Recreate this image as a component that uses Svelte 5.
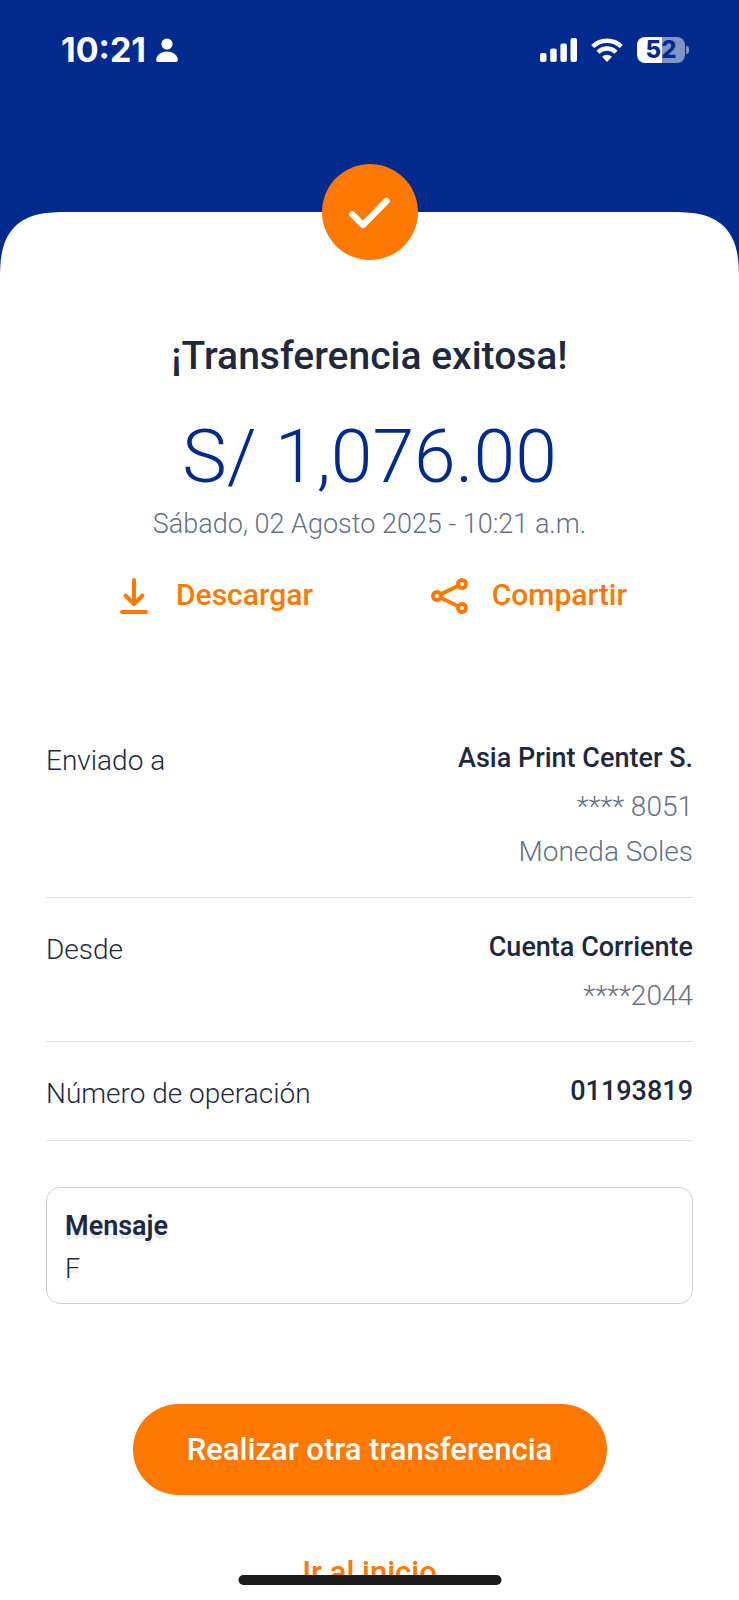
<script>
	let amount = 'S/ 1,076.00';
	let date = 'Sábado, 02 Agosto 2025 - 10:21 a.m.';
	let message = 'F';

	let rows = [
		{ label: 'Enviado a', value: 'Asia Print Center S.', details: ['**** 8051', 'Moneda Soles'] },
		{ label: 'Desde', value: 'Cuenta Corriente', details: ['****2044'] },
		{ label: 'Número de operación', value: '01193819', details: [] }
	];
</script>

<svelte:head>
	<title>Transferencia exitosa</title>
</svelte:head>

<div class="screen">
	<header>
		<div class="status">
			<div class="status-side">
				<span class="time">10:21</span>
				<svg width="22" height="24" viewBox="0 0 22 24" fill="#fff" aria-hidden="true">
					<circle cx="11" cy="6" r="5.6" />
					<path d="M2.2 24C.8 24 .2 23.200 .2 22 .2 17.500 5 13.600 11 13.600S21.800 17.500 21.800 22c0 1.200-.6 2-2 2z" />
				</svg>
			</div>
			<div class="status-side right">
				<svg width="38" height="24" viewBox="0 0 38 24" fill="#fff" aria-hidden="true">
					<rect x="1" y="15" width="6.500" height="9" rx="2" />
					<rect x="11.200" y="10.500" width="6.500" height="13.500" rx="2" />
					<rect x="21.400" y="5.500" width="6.500" height="18.500" rx="2" />
					<rect x="31.500" y="0" width="6.500" height="24" rx="2" />
				</svg>
				<svg width="32" height="24" viewBox="0 0 32 24" aria-hidden="true">
					<g fill="none" stroke="#fff" stroke-width="4.400">
						<path d="M1.700 8.500a20.500 20.500 0 0 1 28.600 0" />
						<path d="M7 14.200a12.800 12.800 0 0 1 18 0" />
					</g>
					<path d="M16 24l-5-5.200a7.300 7.300 0 0 1 10 0z" fill="#fff" />
				</svg>
				<div class="battery">
					<span class="level">52</span>
					<span class="tip"></span>
				</div>
			</div>
		</div>
	</header>

	<main>
		<div class="badge">
			<svg width="42" height="34" viewBox="0 0 42 34" fill="none" stroke="#fff" stroke-width="6.500" stroke-linecap="round" stroke-linejoin="round" aria-hidden="true">
				<path d="M3.500 19.500L14 30 37.500 6" />
			</svg>
		</div>

		<h1>¡Transferencia exitosa!</h1>
		<p class="amount">{amount}</p>
		<p class="date">{date}</p>

		<div class="actions">
			<button class="action">
				<svg width="38" height="38" viewBox="0 0 38 38" fill="none" stroke="currentColor" stroke-width="4" stroke-linecap="round" stroke-linejoin="round" aria-hidden="true">
					<path d="M19 3v23M10.500 18.500L19 27l8.500-8.500M7 35h24" />
				</svg>
				Descargar
			</button>
			<button class="action">
				<svg width="38" height="38" viewBox="0 0 38 38" fill="none" stroke="currentColor" stroke-width="4" aria-hidden="true">
					<circle cx="6" cy="19" r="4" />
					<circle cx="31" cy="7" r="4" />
					<circle cx="31" cy="31" r="4" />
					<path d="M9.600 17.200L27.400 8.800M9.600 20.800L27.400 29.200" />
				</svg>
				Compartir
			</button>
		</div>

		<dl>
			{#each rows as row}
				<div class="row">
					<dt>{row.label}</dt>
					<dd>
						<strong>{row.value}</strong>
						{#if row.details.length > 0}
							<div class="details">
								{#each row.details as detail}
									<span>{detail}</span>
								{/each}
							</div>
						{/if}
					</dd>
				</div>
			{/each}
		</dl>

		<section class="message">
			<h2>Mensaje</h2>
			<p>{message}</p>
		</section>

		<button class="primary">Realizar otra transferencia</button>
		<a class="home" href="#inicio">Ir al inicio</a>
	</main>

	<div class="home-bar"></div>
</div>

<style>
	:global(body) {
		margin: 0;
		background: #fff;
	}

	.screen {
		position: relative;
		height: 100vh;
		overflow: hidden;
		background: #002a8d;
		color: #1e293d;
		font-family: Roboto, 'Open Sans', sans-serif;
		font-size: 27px;
		line-height: 36px;
	}

	header {
		height: 212px;
	}

	.status {
		display: flex;
		justify-content: space-between;
		padding: 32px 54px 0 61px;
		font-family: Inter, sans-serif;
		color: #fff;
	}

	.status-side {
		display: flex;
		align-items: center;
		gap: 10px;
	}

	.status-side.right {
		gap: 14px;
	}

	.time {
		font-size: 34px;
		font-weight: 700;
	}

	.battery {
		position: relative;
		width: 48px;
		height: 26px;
		border-radius: 8px;
		background: linear-gradient(90deg, #fff 52%, #8094c6 52%);
		display: flex;
		align-items: center;
		justify-content: center;
	}

	.level {
		font-size: 24px;
		font-weight: 800;
		color: #002a8d;
	}

	.tip {
		position: absolute;
		right: -4px;
		top: 9px;
		width: 3px;
		height: 8px;
		border-radius: 0 4px 4px 0;
		background: #8094c6;
	}

	main {
		display: flex;
		flex-direction: column;
		align-items: center;
		padding: 0 46px;
		background: #fff;
		border-radius: 68px 68px 0 0;
		corner-shape: superellipse(1.5);
	}

	.badge {
		width: 96px;
		height: 96px;
		margin-top: -48px;
		border-radius: 50%;
		background: #ff7800;
		display: flex;
		align-items: center;
		justify-content: center;
	}

	h1,
	h2,
	p,
	dl,
	dd {
		margin: 0;
	}

	h1 {
		margin-top: 72px;
		font-size: 39px;
		font-weight: 500;
		line-height: 48px;
	}

	.amount {
		margin-top: 34px;
		font-size: 75px;
		font-weight: 300;
		line-height: 84px;
		color: #002a8d;
	}

	.date {
		margin-top: 8px;
		font-weight: 300;
		color: #667085;
	}

	button {
		border: 0;
		background: none;
		font: inherit;
		font-weight: 500;
		cursor: pointer;
	}

	.actions {
		align-self: stretch;
		display: flex;
		justify-content: space-between;
		margin-top: 32px;
		padding: 0 66px 0 69px;
	}

	.action {
		display: flex;
		align-items: center;
		gap: 23px;
		padding: 0;
		font-size: 30px;
		color: #ff7800;
	}

	.action svg {
		margin-top: 3px;
	}

	dl {
		align-self: stretch;
		margin-top: 94px;
	}

	.row {
		display: flex;
		justify-content: space-between;
		box-sizing: border-box;
		min-height: 99px;
		padding: 31px 0 27px;
		border-bottom: 1px solid #dfe1e6;
	}

	dt {
		padding-top: 3px;
		font-size: 28px;
		font-weight: 300;
	}

	dd {
		text-align: right;
	}

	strong {
		font-weight: 500;
	}

	.details {
		display: flex;
		flex-direction: column;
		gap: 9px;
		margin-top: 13px;
		font-size: 28px;
		font-weight: 300;
		color: #667085;
	}

	.message {
		align-self: stretch;
		box-sizing: border-box;
		margin-top: 46px;
		padding: 20px 18px 16px;
		border: 1px solid #ccd2e3;
		border-radius: 14px;
		text-shadow: 0 4px 1px #e3e7f1;
	}

	h2 {
		font-size: 27px;
		font-weight: 600;
		line-height: 36px;
	}

	.message p {
		margin-top: 7px;
		font-weight: 300;
	}

	.primary {
		width: 474px;
		max-width: 100%;
		height: 91px;
		margin-top: 100px;
		border-radius: 46px;
		background: #ff7800;
		font-size: 31px;
		color: #fff;
	}

	.home {
		margin: 60px 0 20px;
		font-size: 31px;
		font-weight: 500;
		color: #ff7800;
		text-decoration: none;
	}

	/* system gesture bar, sits over the page */
	.home-bar {
		position: absolute;
		bottom: 15px;
		left: 50%;
		width: 263px;
		height: 10px;
		border-radius: 5px;
		background: #1c1c1c;
		transform: translateX(-50%);
	}
</style>
